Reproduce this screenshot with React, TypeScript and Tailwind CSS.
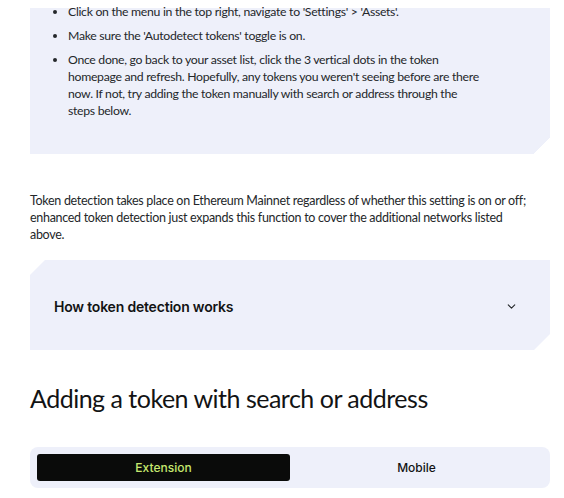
import React, { useState } from 'react';
import { ChevronDown } from 'lucide-react';

const steps = [
  "Click on the menu in the top right, navigate to 'Settings' > 'Assets'.",
  "Make sure the 'Autodetect tokens' toggle is on.",
  "Once done, go back to your asset list, click the 3 vertical dots in the token homepage and refresh. Hopefully, any tokens you weren't seeing before are there now. If not, try adding the token manually with search or address through the steps below.",
];

export default function App() {
  const [tab, setTab] = useState<'extension' | 'mobile'>('extension');

  return (
    <div className="min-h-screen bg-white text-[#24272a] font-['Lato','Noto_Sans',sans-serif] pl-[30px] pr-[14px] pt-[8px]">
      {/* Steps card, bottom-right corner cut */}
      <div className="flow-root bg-[linear-gradient(-45deg,transparent_12px,#eef0fa_12px)] pl-[28px] pr-[65px] pb-[35px]">
        <ul className="list-disc pl-[10px] -mt-[5px] space-y-[7px] text-[12.25px] leading-[17px] tracking-[-0.3px]">
          {steps.map((s) => (
            <li key={s}>{s}</li>
          ))}
        </ul>
      </div>

      <p className="mt-[38px] text-[12.5px] leading-[17px] tracking-[-0.3px] pr-[4px]">
        Token detection takes place on Ethereum Mainnet regardless of whether this setting is on or off; enhanced token detection just expands this function to cover the additional networks listed
        <br />
        above.
      </p>

      {/* Accordion */}
      <button className="mt-[17px] w-full h-[90px] bg-[#eef0fa] flex items-center justify-between pl-[24px] pr-[32px] text-left [clip-path:polygon(15px_0,100%_0,100%_calc(100%-16px),calc(100%-16px)_100%,0_100%,0_15px)]">
        <span className="text-[14px] font-['Inter',sans-serif] font-semibold tracking-[-0.2px] text-[#121314] mt-[3px]">How token detection works</span>
        <ChevronDown className="w-[13px] h-[13px] text-[#24272a] mt-[2px]" strokeWidth={2} />
      </button>

      <h2 className="mt-[31px] text-[25px] leading-[34px] font-normal tracking-[-0.5px] text-[#121314]">
        Adding a token with search or address
      </h2>

      {/* Tabs */}
      <div className="mt-[32px] bg-[#eef0fa] rounded-[8px] p-[7px] grid grid-cols-2 h-[41px]">
        <button
          onClick={() => setTab('extension')}
          className={`rounded-[3px] text-[12px] font-['Inter',sans-serif] font-medium ${tab === 'extension' ? 'bg-[#0a0b0a] text-[#c6e86f]' : 'text-[#121314]'}`}
        >
          Extension
        </button>
        <button
          onClick={() => setTab('mobile')}
          className={`rounded-[3px] text-[12px] font-['Inter',sans-serif] font-medium ${tab === 'mobile' ? 'bg-[#0a0b0a] text-[#c6e86f]' : 'text-[#121314]'}`}
        >
          Mobile
        </button>
      </div>
    </div>
  );
}
